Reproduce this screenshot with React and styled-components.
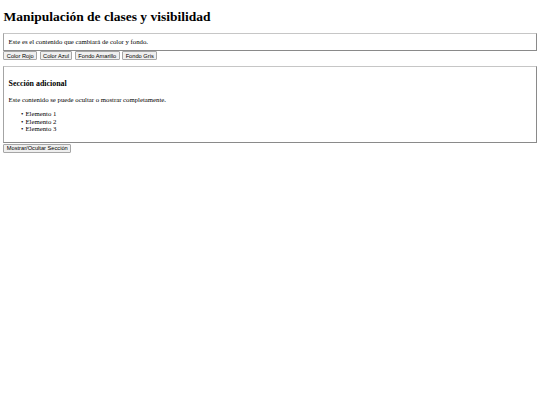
import React, { useState } from "react";
import styled, { createGlobalStyle } from "styled-components";

const GlobalStyle = createGlobalStyle`
  body {
    margin: 3.4px;
    background: #fff;
    color: #000;
    font-family: "Liberation Serif", "Times New Roman", serif;
    font-size: 6.75px;
  }
`;

const colorMap = {
  rojo: { color: "red", background: "transparent" },
  azul: { color: "blue", background: "transparent" },
  amarillo: { color: "inherit", background: "yellow" },
  gris: { color: "inherit", background: "lightgray" }
};

const Page = styled.div`
  display: flex;
  flex-direction: column;
  align-items: stretch;
`;

const Title = styled.h1`
  font-size: 13.5px;
  font-weight: bold;
  margin: 5.6px 0 8.4px;
  line-height: 15.5px;
`;

const Box = styled.div`
  border: 1px solid #9a9a9a;
  border-top-color: #c6c6c6;
  border-left-color: #a4a4a4;
  border-right-color: #8a8a8a;
  border-bottom-color: #8a8a8a;
  padding: 4.2px;
  margin-top: ${p => p.$top || 0}px;
  line-height: 7.8px;
  color: ${p => (p.$tone ? p.$tone.color : "inherit")};
  background: ${p => (p.$tone ? p.$tone.background : "transparent")};
`;

const ButtonRow = styled.div`
  display: flex;
  gap: 2.6px;
  margin-top: 0.3px;
`;

const Button = styled.button`
  font-family: "Liberation Sans", Arial, sans-serif;
  font-size: 5.7px;
  line-height: 6.4px;
  height: 8.8px;
  padding: 0 2.4px;
  color: #000;
  background: #efefef;
  border: 1px solid #a6a6a6;
  border-radius: 1px;
  cursor: pointer;
  align-self: flex-start;
`;

const SectionTitle = styled.h3`
  font-size: 7.9px;
  font-weight: bold;
  line-height: 9px;
  margin: 7.9px 0;
`;

const Text = styled.p`
  margin: 7.9px 0 6.75px;
`;

const List = styled.ul`
  margin: 6.75px 0 5.4px;
  padding-left: 16.9px;
  list-style: none;
`;

const Item = styled.li`
  line-height: 7.6px;

  &::before {
    content: "•";
    display: inline-block;
    width: 4.4px;
    margin-left: -4.4px;
    line-height: 7.6px;
  }
`;

export default function App() {
  const [tone, setTone] = useState(null);
  const [visible, setVisible] = useState(true);

  return (
    <Page>
      <GlobalStyle />
      <Title>Manipulación de clases y visibilidad</Title>

      <Box $tone={tone ? colorMap[tone] : null}>
        Este es el contenido que cambiará de color y fondo.
      </Box>
      <ButtonRow>
        <Button onClick={() => setTone("rojo")}>Color Rojo</Button>
        <Button onClick={() => setTone("azul")}>Color Azul</Button>
        <Button onClick={() => setTone("amarillo")}>Fondo Amarillo</Button>
        <Button onClick={() => setTone("gris")}>Fondo Gris</Button>
      </ButtonRow>

      {visible && (
        <Box $top={5.4}>
          <SectionTitle>Sección adicional</SectionTitle>
          <Text>Este contenido se puede ocultar o mostrar completamente.</Text>
          <List>
            <Item>Elemento 1</Item>
            <Item>Elemento 2</Item>
            <Item>Elemento 3</Item>
          </List>
        </Box>
      )}
      <ButtonRow>
        <Button onClick={() => setVisible(v => !v)}>Mostrar/Ocultar Sección</Button>
      </ButtonRow>
    </Page>
  );
}
